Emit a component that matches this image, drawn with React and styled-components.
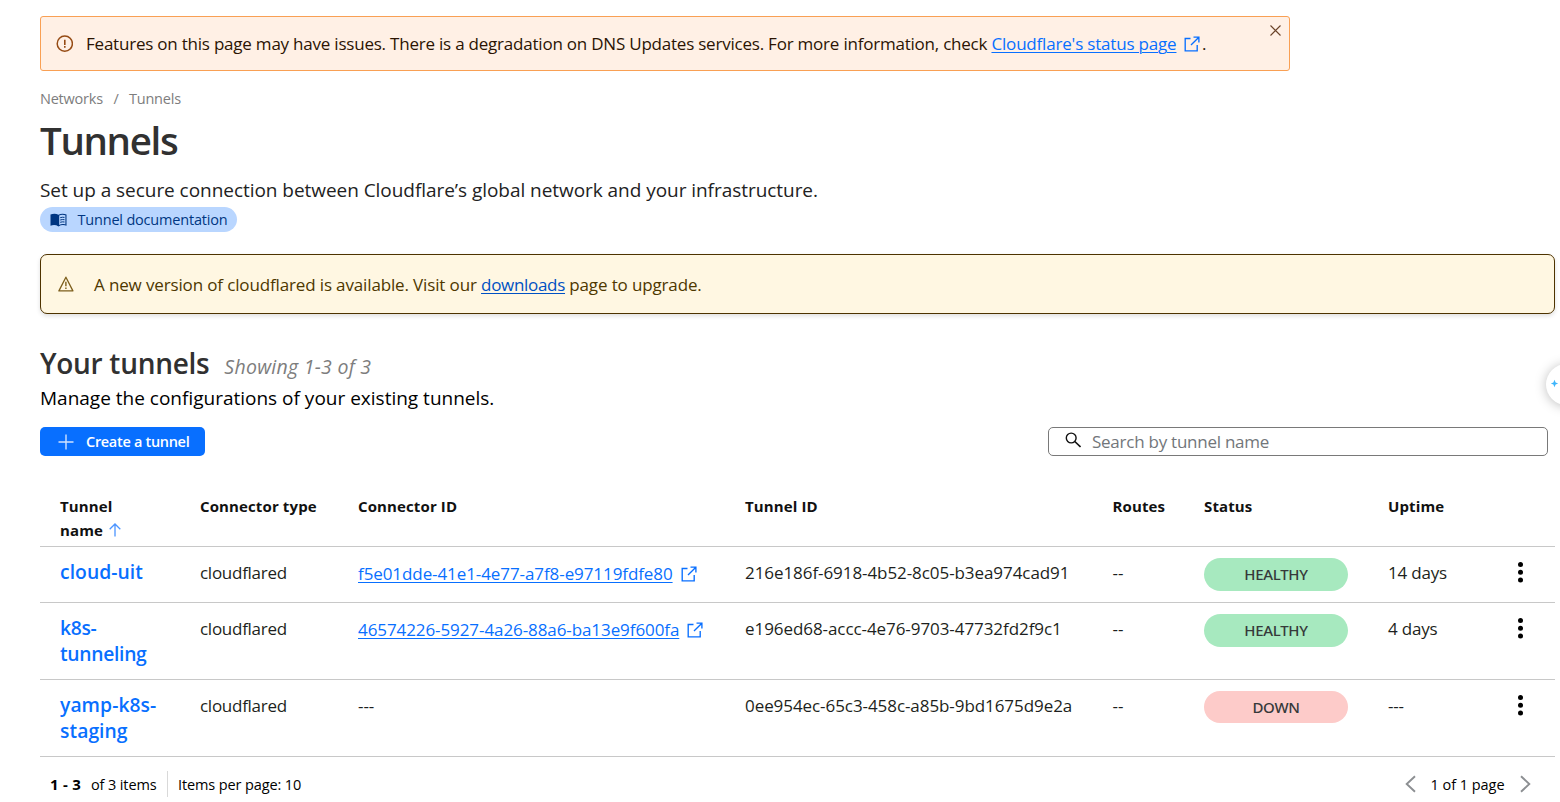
import React from 'react';
import styled, { createGlobalStyle } from 'styled-components';

const GlobalStyle = createGlobalStyle`
  *, *::before, *::after { box-sizing: border-box; }
  html, body { margin: 0; height: 100%; overflow: hidden; background: #fff; }
  body { font-family: "Open Sans", "Noto Sans", sans-serif; color: #1d1f20; }
  h1, h2, p { margin: 0; font-weight: 400; }
  svg { display: block; flex: none; }
`;

const Page = styled.main`
  position: relative;
  width: 1560px;
  height: 802px;
  padding: 16px 5px 0 40px;
  overflow: hidden;
`;

const StatusAlert = styled.div`
  display: flex;
  align-items: flex-start;
  width: 1250px;
  height: 55px;
  padding: 0 8px 0 15px;
  border: 1px solid #f9a054;
  border-radius: 3px;
  background: #fff0e5;
  color: #2b1403;
`;

const AlertIcon = styled.span`
  padding: 18px 13px 0 0;
`;

const AlertText = styled.p`
  display: flex;
  padding-top: 14px;
  font-size: 17px;
  line-height: 26px;
  letter-spacing: -0.218px;
  white-space: pre;
`;

const CloseButton = styled.button`
  margin: 8px 0 0 auto;
  padding: 0;
  border: 0;
  background: none;
  color: #6a4329;
`;

const Link = styled.a`
  color: #086fff;
  text-decoration: underline;
  text-decoration-thickness: 1px;
  text-underline-offset: 2px;
`;

const StatusLink = styled(Link)`
  letter-spacing: -0.187px;
`;

const StatusLinkIcon = styled.span`
  padding: 5px 1.5px 0 8px;
  color: #086fff;
`;

const Breadcrumb = styled.nav`
  display: flex;
  gap: 10.5px;
  margin-top: 16px;
  height: 23px;
  font-size: 14.5px;
  line-height: 24px;
  letter-spacing: -0.22px;
  color: #7d7d7d;
`;

const PageTitle = styled.h1`
  height: 60px;
  margin-top: 0;
  font-size: 38.5px;
  font-weight: 600;
  line-height: 60px;
  letter-spacing: -1.35px;
  color: #313131;
`;

const Lead = styled.p`
  margin-top: 5px;
  height: 32px;
  font-size: 19px;
  line-height: 30px;
  letter-spacing: -0.046px;
  color: #222;
`;

const DocPill = styled.a`
  display: flex;
  align-items: center;
  gap: 10.5px;
  width: 197px;
  height: 25px;
  padding-left: 10px;
  border-radius: 13px;
  background: #b9d6ff;
  color: #003682;
  font-size: 14.5px;
  letter-spacing: -0.19px;
`;

const UpgradeNotice = styled.div`
  display: flex;
  align-items: center;
  height: 60px;
  margin-top: 22px;
  padding-left: 17px;
  border: 1px solid #4e3300;
  border-radius: 7px;
  background: #fff7e2;
  box-shadow: 0 2px 4px rgba(0, 0, 0, 0.13);
  color: #4e3700;
`;

const NoticeText = styled.p`
  padding: 2px 0 0 20px;
  font-size: 17px;
  line-height: 26px;
  letter-spacing: -0.14px;
`;

const DownloadLink = styled(Link)`
  color: #0051c3;
  letter-spacing: -0.3px;
`;

const SectionHead = styled.div`
  display: flex;
  align-items: baseline;
  gap: 15px;
  height: 40px;
  margin-top: 29px;
`;

const SectionTitle = styled.h2`
  font-size: 28px;
  font-weight: 600;
  line-height: 40px;
  letter-spacing: -0.29px;
  color: #313131;
`;

const Count = styled.span`
  font-size: 19.5px;
  font-style: italic;
  letter-spacing: 0.26px;
  color: #7d7d7d;
`;

const SectionText = styled.p`
  height: 30px;
  font-size: 19px;
  line-height: 30px;
  color: #000;
`;

const Toolbar = styled.div`
  display: flex;
  justify-content: space-between;
  margin-top: 14px;
  padding-right: 7px;
`;

const CreateButton = styled.button`
  display: flex;
  align-items: center;
  gap: 12px;
  width: 165px;
  height: 29px;
  padding: 0 0 0 18px;
  border: 0;
  border-radius: 5px;
  background: #086fff;
  color: #fff;
  font: 600 14.5px "Open Sans", sans-serif;
  letter-spacing: -0.31px;
`;

const SearchBox = styled.div`
  display: flex;
  align-items: center;
  width: 500px;
  height: 29px;
  padding-left: 16px;
  border: 1px solid #797979;
  border-radius: 5px;
  gap: 11px;
  font-size: 17px;
  letter-spacing: -0.25px;
  color: #72767a;
`;

const SearchIcon = styled.span`
  padding-bottom: 4px;
  color: #111;
`;

const Table = styled.div`
  margin-top: 38px;
`;

const Row = styled.div`
  display: grid;
  grid-template-columns: 140px 158px 387px 367.5px 91.5px 184px 1fr 40px;
  height: ${(p) => p.$height}px;
  padding-left: 20px;
  border-bottom: 1px solid #c8c8c8;
`;

const HeadCell = styled.div`
  font-size: 15px;
  font-weight: 700;
  line-height: 24px;
  letter-spacing: 0.12px;
  color: #111;
`;

const SortLine = styled.span`
  display: flex;
  align-items: center;
  gap: 6px;
  color: #111;
`;

const NameLink = styled.a`
  width: 110px;
  padding-top: 12px;
  font-size: 19.3px;
  font-weight: 600;
  line-height: 26px;
  letter-spacing: ${(p) => p.$tracking || 0}px;
  color: #086fff;
`;

const Cell = styled.div`
  display: flex;
  align-items: flex-start;
  gap: 8px;
  padding-top: 13px;
  font-size: 17px;
  line-height: 26px;
  letter-spacing: ${(p) => p.$tracking || 0}px;
`;

const ConnectorIcon = styled.span`
  padding-top: 6px;
  color: #086fff;
`;

const ConnectorLink = styled(Link)`
  padding-top: 1px;
`;

const StatusPill = styled.span`
  display: flex;
  justify-content: center;
  width: 144px;
  height: ${(p) => (p.$down ? 32 : 33)}px;
  margin-top: 11px;
  border-radius: 17px;
  background: ${(p) => (p.$down ? '#fdcbc9' : '#a7e9bf')};
  color: #36393a;
  font: 500 15px/32px "Noto Sans", sans-serif;
  letter-spacing: -0.3px;
`;

const MenuButton = styled.button`
  align-self: start;
  margin: 15px 0 0 2px;
  padding: 0;
  border: 0;
  background: none;
  color: #000;
`;

const Footer = styled.div`
  display: flex;
  align-items: center;
  height: 26px;
  margin-top: 14px;
  padding: 0 24.5px 0 10px;
  font-size: 14.5px;
  letter-spacing: -0.12px;
  color: #000;
`;

const Range = styled.strong`
  width: 41px;
  font-size: 15px;
  letter-spacing: 0.24px;
`;

const Total = styled.span`
  width: 76px;
`;

const PageSize = styled.span`
  display: flex;
  align-items: center;
  height: 26px;
  padding-left: 10px;
  border-left: 1px solid #d9d9d9;
`;

const Pager = styled.div`
  display: flex;
  align-items: center;
  gap: 15px;
  margin-left: auto;
  letter-spacing: -0.04px;
`;

const Assistant = styled.div`
  position: absolute;
  top: 363.5px;
  left: 1546px;
  width: 41px;
  height: 41px;
  padding: 15.5px 0 0 4px;
  border-radius: 50%;
  background: #fff;
  box-shadow: 0 1px 12px rgba(0, 0, 0, 0.26);
  color: #3fb5fb;
`;

const External = () => (
  <svg width="16" height="16" viewBox="0 0 16 16" fill="none" stroke="currentColor" strokeWidth="1.35">
    <path d="M6.5 2.5H1.2v12.3h12V9" />
    <path d="M9.5 1.1h5.4v5.4M14.6 1.4 7 9" />
  </svg>
);

const Chevron = ({ d }) => (
  <svg width="11" height="18" viewBox="0 0 11 18" fill="none" stroke="#8c8f92" strokeWidth="1.9">
    <path d={d} />
  </svg>
);

const tunnels = [
  { name: ['cloud-uit'], id: 'f5e01dde-41e1-4e77-a7f8-e97119fdfe80', tunnel: '216e186f-6918-4b52-8c05-b3ea974cad91', status: 'HEALTHY', uptime: '14 days', height: 56, tracking: 0.06 },
  { name: ['k8s-', 'tunneling'], id: '46574226-5927-4a26-88a6-ba13e9f600fa', tunnel: 'e196ed68-accc-4e76-9703-47732fd2f9c1', status: 'HEALTHY', uptime: '4 days', height: 77, tracking: -0.3 },
  { name: ['yamp-k8s-', 'staging'], tunnel: '0ee954ec-65c3-458c-a85b-9bd1675d9e2a', status: 'DOWN', uptime: '---', height: 77, tracking: 0.06 },
];

export default function App() {
  return (
    <Page>
      <GlobalStyle />
      <StatusAlert>
        <AlertIcon>
          <svg width="17" height="18" viewBox="0 0 17 18" fill="none" stroke="#964b14" strokeWidth="1.5">
            <circle cx="8.8" cy="8.7" r="7.6" />
            <path d="M8.8 4.7v5.2M8.8 11.1v1.7" strokeWidth="1.6" />
          </svg>
        </AlertIcon>
        <AlertText>
          {'Features on this page may have issues. There is a degradation on DNS Updates services. For more information, check '}
          <StatusLink>Cloudflare's status page</StatusLink>
          <StatusLinkIcon><External /></StatusLinkIcon>.
        </AlertText>
        <CloseButton aria-label="Close">
          <svg width="11" height="11" viewBox="0 0 11 11" stroke="currentColor" strokeWidth="1.1">
            <path d="M.5.5l10 10M10.5.5l-10 10" />
          </svg>
        </CloseButton>
      </StatusAlert>

      <Breadcrumb><span>Networks</span><span>/</span><span>Tunnels</span></Breadcrumb>
      <PageTitle>Tunnels</PageTitle>
      <Lead>Set up a secure connection between Cloudflare’s global network and your infrastructure.</Lead>
      <DocPill>
        <svg width="17" height="14" viewBox="0 0 17 14">
          <path fill="currentColor" d="M.5 1.6C3 .4 6 .4 8.5 1.7 11 .4 14 .4 16.5 1.6v11.2c-2.5-1-5.5-1-8 .6-2.5-1.6-5.5-1.6-8-.6z" />
          <path fill="#b9d6ff" d="M9.2 2.5c2-1 4.2-1 6.2-.2v9.200c-2-.6-4.200-.6-6.200.4z" />
          <path fill="none" stroke="currentColor" strokeWidth="1" d="M10.200 4.700c1.400-.5 2.900-.6 4.300-.3M10.200 7c1.400-.5 2.900-.6 4.300-.3M10.200 9.300c1.400-.5 2.900-.6 4.300-.3" />
        </svg>
        Tunnel documentation
      </DocPill>

      <UpgradeNotice>
        <svg width="16" height="16" viewBox="0 0 16 16" fill="none" stroke="#7d5f1c" strokeWidth="1.3">
          <path d="M7.900 1.200 14.900 14.900H.9z" strokeLinejoin="round" />
          <path d="M7.900 5.800v4.500M7.900 11.400v1.600" strokeWidth="1.4" />
        </svg>
        <NoticeText>
          A new version of cloudflared is available. Visit our <DownloadLink>downloads</DownloadLink> page to upgrade.
        </NoticeText>
      </UpgradeNotice>

      <SectionHead>
        <SectionTitle>Your tunnels</SectionTitle>
        <Count>Showing 1-3 of 3</Count>
      </SectionHead>
      <SectionText>Manage the configurations of your existing tunnels.</SectionText>

      <Toolbar>
        <CreateButton>
          <svg width="16" height="16" viewBox="0 0 16 16" stroke="#cfe2ff" strokeWidth="1.4">
            <path d="M8 .5v15M.5 8h15" />
          </svg>
          Create a tunnel
        </CreateButton>
        <SearchBox>
          <SearchIcon>
            <svg width="16" height="16" viewBox="0 0 16 16" fill="none" stroke="currentColor" strokeWidth="1.4">
              <circle cx="6.2" cy="6" r="4.9" />
              <path d="M9.8 9.5 15.5 15" strokeWidth="1.6" />
            </svg>
          </SearchIcon>
          Search by tunnel name
        </SearchBox>
      </Toolbar>

      <Table>
        <Row $height={53}>
          <HeadCell>
            Tunnel
            <SortLine>
              name
              <svg width="12" height="14" viewBox="0 0 12 14" fill="none" stroke="#4b94ff" strokeWidth="1.3">
                <path d="M6 13.500V1M.7 6.300 6 1l5.300 5.300" />
              </svg>
            </SortLine>
          </HeadCell>
          <HeadCell>Connector type</HeadCell>
          <HeadCell>Connector ID</HeadCell>
          <HeadCell>Tunnel ID</HeadCell>
          <HeadCell>Routes</HeadCell>
          <HeadCell>Status</HeadCell>
          <HeadCell>Uptime</HeadCell>
        </Row>
        {tunnels.map((t) => (
          <Row key={t.tunnel} $height={t.height}>
            <NameLink $tracking={t.tracking}>
              {t.name.map((part) => <div key={part}>{part}</div>)}
            </NameLink>
            <Cell $tracking={-0.27}>cloudflared</Cell>
            <Cell $tracking={-0.085}>
              {t.id ? (
                <>
                  <ConnectorLink>{t.id}</ConnectorLink>
                  <ConnectorIcon><External /></ConnectorIcon>
                </>
              ) : '---'}
            </Cell>
            <Cell $tracking={-0.07}>{t.tunnel}</Cell>
            <Cell>--</Cell>
            <div><StatusPill $down={t.status === 'DOWN'}>{t.status}</StatusPill></div>
            <Cell $tracking={-0.19}>{t.uptime}</Cell>
            <MenuButton aria-label="Actions">
              <svg width="7" height="21" viewBox="0 0 7 21" fill="currentColor">
                <circle cx="3.5" cy="2.6" r="2.5" />
                <circle cx="3.5" cy="10.3" r="2.5" />
                <circle cx="3.5" cy="18" r="2.5" />
              </svg>
            </MenuButton>
          </Row>
        ))}
      </Table>

      <Footer>
        <Range>1 - 3</Range>
        <Total>of 3 items</Total>
        <PageSize>Items per page: 10</PageSize>
        <Pager>
          <Chevron d="M10 1.2 1.7 9 10 16.8" />
          <span>1 of 1 page</span>
          <Chevron d="M1 1.2 9.3 9 1 16.8" />
        </Pager>
      </Footer>

      <Assistant>
        <svg width="9" height="9" viewBox="0 0 9 9" fill="currentColor">
          <path d="M4.500.8 5.600 3.400 8.200 4.500 5.600 5.600 4.500 8.200 3.400 5.600.8 4.500 3.400 3.400z" />
        </svg>
      </Assistant>
    </Page>
  );
}
